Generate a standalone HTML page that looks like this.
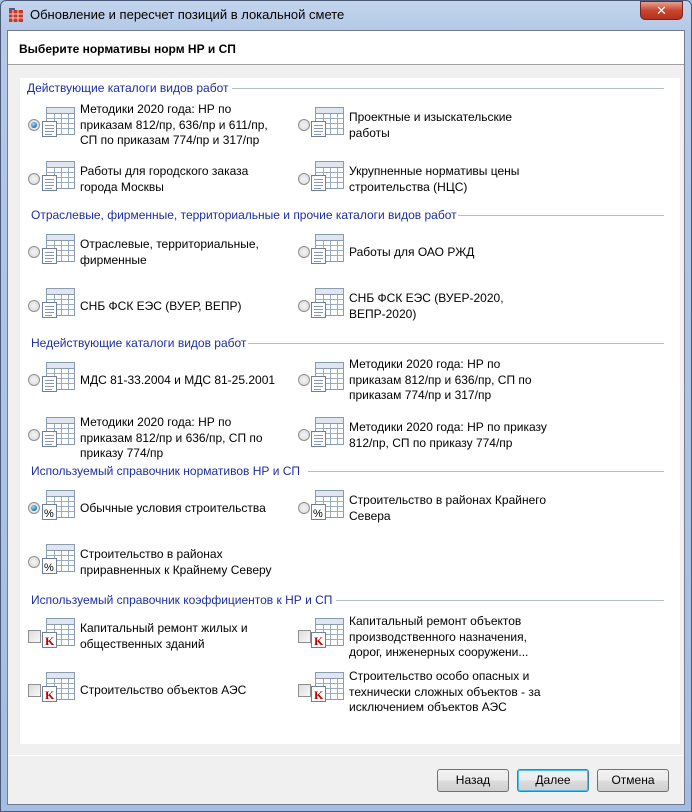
<!DOCTYPE html>
<html><head><meta charset="utf-8"><style>
*{margin:0;padding:0;box-sizing:border-box}
body{width:692px;height:812px;overflow:hidden;background:#a9c0e2;font-family:"Liberation Sans","DejaVu Sans",sans-serif;font-size:12px;color:#000;position:relative}
.frame{position:absolute;left:0;top:0;width:692px;height:812px;background:linear-gradient(180deg,#c3d4ec 0,#b4c9e8 30px,#a4bde2 100%);border:1px solid #4a5a78;border-radius:6px 6px 0 0}
.title{position:absolute;left:30px;top:7px;font-size:13px;color:#000}
.close{position:absolute;left:640px;top:1px;width:43px;height:19px;border-radius:0 0 5px 5px;background:linear-gradient(#e8a090,#c8452f 50%,#b3301c);border:1px solid #6e2a20;color:#fff;font-weight:bold;text-align:center;line-height:17px;font-size:13px}
.client{position:absolute;left:7px;top:30px;width:678px;height:775px;background:#f0f0f0;border:1px solid #6f7c92}
.head{position:absolute;left:0;top:0;width:676px;height:34px;background:#fff;border-bottom:1px solid #a0a0a0}
.head b{position:absolute;left:11px;top:11px;font-size:12px}
.panel{position:absolute;left:12px;top:47px;width:660px;height:666px;background:#fff}
.sep{position:absolute;left:0;top:724px;width:676px;height:1px;background:#a0a0a0;border-bottom:1px solid #fff}
.t{position:absolute;line-height:15.5px;white-space:nowrap}
.sec{position:absolute;color:#1c2ea0;white-space:nowrap;line-height:14px}
.line{position:absolute;height:1px;background:#b5bccc}
.rad{position:absolute;width:12px;height:12px;border-radius:50%;border:1px solid #8e8f8f;background:radial-gradient(#f4f4f4,#d8d8d8)}
.rad.on::after{content:"";position:absolute;left:2px;top:2px;width:6px;height:6px;border-radius:50%;background:radial-gradient(circle at 40% 35%,#9ee0ff,#1f6fb0 70%)}
.chk{position:absolute;width:13px;height:13px;border:1px solid #8e8f8f;background:linear-gradient(135deg,#dcdcdc,#f8f8f8)}
svg.ic{position:absolute;width:34px;height:30px}
.btn{position:absolute;top:738px;width:72px;height:23px;border:1px solid #707070;border-radius:3px;background:linear-gradient(#f2f2f2 0,#ebebeb 50%,#dddddd 51%,#cfcfcf);text-align:center;line-height:21px}
.btn.def{border-color:#3c7fb1;box-shadow:inset 0 0 0 1px #48c0f0}
</style></head><body>
<svg width="0" height="0" style="position:absolute">
<defs>
<g id="grid"><rect x="4.5" y="0.5" width="28" height="27" fill="#fff" stroke="#8a9bb0"/><path d="M4.5 6.5h28M4.5 11.5h28M4.5 16.5h28M4.5 21.5h28M12.5 0.5v27M19.5 0.5v27M26.5 0.5v27" stroke="#9cacc0" fill="none"/><rect x="4.5" y="0.5" width="28" height="6" fill="#dfe6ef" stroke="#8a9bb0"/></g>
<g id="doc"><use href="#grid"/><rect x="0.5" y="14.5" width="14" height="15" fill="#fff" stroke="#6f7f95"/><path d="M3 18.5h9M3 21.5h9M3 24.5h9M3 27.5h7" stroke="#8797ad"/></g>
<g id="pct"><use href="#grid"/><rect x="0.5" y="14.5" width="14" height="15" fill="#fff" stroke="#6f7f95"/><text x="2" y="27" font-size="11" font-family="Liberation Sans" fill="#000">%</text></g>
<g id="kk"><use href="#grid"/><rect x="0.5" y="14.5" width="14" height="15" fill="#fff" stroke="#6f7f95"/><text x="3" y="27" font-size="12" font-weight="bold" font-family="Liberation Serif" fill="#c00000">K</text></g>
</defs></svg>
<div class="frame"></div>
<svg style="position:absolute;left:8px;top:7px" width="16" height="16"><rect x="1" y="3" width="14" height="12" fill="#c0392b"/><path d="M1 7h14M1 11h14M5 3v12M10 3v12" stroke="#f2d0c8"/><rect x="1" y="1" width="6" height="2" fill="#3a5da8"/></svg>
<div class="title">Обновление и пересчет позиций в локальной смете</div>
<div class="close">✕</div>
<div class="client">
<div class="head"><b>Выберите нормативы норм НР и СП</b></div>
<div class="panel"></div>
<div class="sep"></div>
<div class="btn" style="left:429px">Назад</div>
<div class="btn def" style="left:509px">Далее</div>
<div class="btn" style="left:589px">Отмена</div>
</div>

<!-- sections -->
<div class="sec" style="left:27px;top:81px">Действующие каталоги видов работ</div><div class="line" style="left:232px;top:88px;width:432px"></div>
<div class="sec" style="left:31px;top:208px">Отраслевые, фирменные, территориальные и прочие каталоги видов работ</div><div class="line" style="left:458px;top:215px;width:206px"></div>
<div class="sec" style="left:31px;top:336px">Недействующие каталоги видов работ</div><div class="line" style="left:248px;top:343px;width:416px"></div>
<div class="sec" style="left:31px;top:464px">Используемый справочник нормативов НР и СП</div><div class="line" style="left:308px;top:471px;width:356px"></div>
<div class="sec" style="left:31px;top:593px">Используемый справочник коэффициентов к НР и СП</div><div class="line" style="left:336px;top:600px;width:328px"></div>

<!-- row helper: radio at x, icon at x+10, text at x+46 -->
<div class="rad on" style="left:28px;top:119px"></div><svg class="ic" style="left:42px;top:107px"><use href="#doc"/></svg>
<div class="t" style="left:80px;top:102px">Методики 2020 года: НР по<br>приказам 812/пр, 636/пр и 611/пр,<br>СП по приказам 774/пр и 317/пр</div>
<div class="rad" style="left:298px;top:119px"></div><svg class="ic" style="left:311px;top:107px"><use href="#doc"/></svg>
<div class="t" style="left:349px;top:110px">Проектные и изыскательские<br>работы</div>

<div class="rad" style="left:28px;top:173px"></div><svg class="ic" style="left:42px;top:161px"><use href="#doc"/></svg>
<div class="t" style="left:80px;top:164px">Работы для городского заказа<br>города Москвы</div>
<div class="rad" style="left:298px;top:173px"></div><svg class="ic" style="left:311px;top:161px"><use href="#doc"/></svg>
<div class="t" style="left:349px;top:164px">Укрупненные нормативы цены<br>строительства (НЦС)</div>

<div class="rad" style="left:28px;top:246px"></div><svg class="ic" style="left:42px;top:234px"><use href="#doc"/></svg>
<div class="t" style="left:80px;top:237px">Отраслевые, территориальные,<br>фирменные</div>
<div class="rad" style="left:298px;top:246px"></div><svg class="ic" style="left:311px;top:234px"><use href="#doc"/></svg>
<div class="t" style="left:349px;top:245px">Работы для ОАО РЖД</div>

<div class="rad" style="left:28px;top:300px"></div><svg class="ic" style="left:42px;top:288px"><use href="#doc"/></svg>
<div class="t" style="left:80px;top:299px">СНБ ФСК ЕЭС (ВУЕР, ВЕПР)</div>
<div class="rad" style="left:298px;top:300px"></div><svg class="ic" style="left:311px;top:288px"><use href="#doc"/></svg>
<div class="t" style="left:349px;top:291px">СНБ ФСК ЕЭС (ВУЕР-2020,<br>ВЕПР-2020)</div>

<div class="rad" style="left:28px;top:374px"></div><svg class="ic" style="left:42px;top:362px"><use href="#doc"/></svg>
<div class="t" style="left:80px;top:373px">МДС 81-33.2004 и МДС 81-25.2001</div>
<div class="rad" style="left:298px;top:374px"></div><svg class="ic" style="left:311px;top:362px"><use href="#doc"/></svg>
<div class="t" style="left:349px;top:357px">Методики 2020 года: НР по<br>приказам 812/пр и 636/пр, СП по<br>приказам 774/пр и 317/пр</div>

<div class="rad" style="left:28px;top:429px"></div><svg class="ic" style="left:42px;top:417px"><use href="#doc"/></svg>
<div class="t" style="left:80px;top:415px">Методики 2020 года: НР по<br>приказам 812/пр и 636/пр, СП по<br>приказу 774/пр</div>
<div class="rad" style="left:298px;top:429px"></div><svg class="ic" style="left:311px;top:417px"><use href="#doc"/></svg>
<div class="t" style="left:349px;top:420px">Методики 2020 года: НР по приказу<br>812/пр, СП по приказу 774/пр</div>

<div class="rad on" style="left:28px;top:502px"></div><svg class="ic" style="left:42px;top:490px"><use href="#pct"/></svg>
<div class="t" style="left:80px;top:501px">Обычные условия строительства</div>
<div class="rad" style="left:298px;top:502px"></div><svg class="ic" style="left:311px;top:490px"><use href="#pct"/></svg>
<div class="t" style="left:349px;top:493px">Строительство в районах Крайнего<br>Севера</div>

<div class="rad" style="left:28px;top:556px"></div><svg class="ic" style="left:42px;top:544px"><use href="#pct"/></svg>
<div class="t" style="left:80px;top:547px">Строительство в районах<br>приравненных к Крайнему Северу</div>

<div class="chk" style="left:28px;top:630px"></div><svg class="ic" style="left:42px;top:618px"><use href="#kk"/></svg>
<div class="t" style="left:80px;top:621px">Капитальный ремонт жилых и<br>общественных зданий</div>
<div class="chk" style="left:298px;top:630px"></div><svg class="ic" style="left:311px;top:618px"><use href="#kk"/></svg>
<div class="t" style="left:349px;top:614px">Капитальный ремонт объектов<br>производственного назначения,<br>дорог, инженерных сооружени...</div>

<div class="chk" style="left:28px;top:684px"></div><svg class="ic" style="left:42px;top:672px"><use href="#kk"/></svg>
<div class="t" style="left:80px;top:683px">Строительство объектов АЭС</div>
<div class="chk" style="left:298px;top:684px"></div><svg class="ic" style="left:311px;top:672px"><use href="#kk"/></svg>
<div class="t" style="left:349px;top:669px">Строительство особо опасных и<br>технически сложных объектов - за<br>исключением объектов АЭС</div>
</body></html>
